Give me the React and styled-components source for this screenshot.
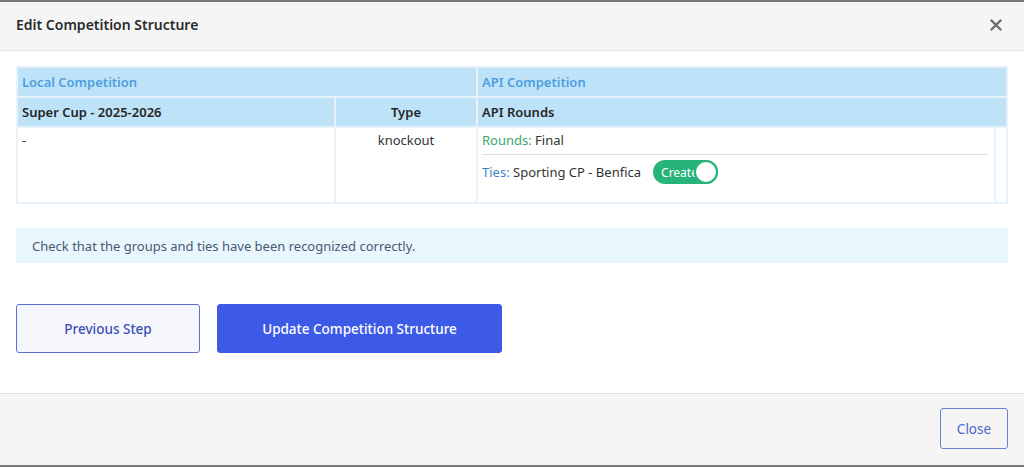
import React, { useState } from "react";
import styled, { createGlobalStyle } from "styled-components";

/* ---------- Global ---------- */
const GlobalStyle = createGlobalStyle`
  html, body {
    margin: 0;
    padding: 0;
    background: #fff;
  }
  body {
    font-family: "Noto Sans", "Open Sans", sans-serif;
    color: #333;
  }
  * { box-sizing: border-box; }
`;

/* ---------- Modal shell ---------- */
const Modal = styled.div`
  width: 1024px;
  height: 467px;
  display: flex;
  flex-direction: column;
  border-top: 2px solid #7a7a7a;
  border-bottom: 2px solid #7a7a7a;
  background: #fff;
`;

const Header = styled.div`
  height: 49px;
  display: flex;
  align-items: center;
  justify-content: space-between;
  padding: 0 16px 3px;
  background: #f5f5f5;
  border-bottom: 1px solid #e6e6e6;
`;

const Title = styled.h5`
  margin: 0;
  font-size: 14px;
  font-weight: 600;
  color: #2b2b2b;
`;

const CloseX = styled.button`
  border: none;
  background: none;
  padding: 0;
  width: 20px;
  height: 20px;
  display: flex;
  align-items: center;
  justify-content: center;
  cursor: pointer;
  margin-right: 2px;
`;

const Body = styled.div`
  flex: 1;
  padding: 15px 16px 0;
`;

/* ---------- Table ---------- */
const Table = styled.table`
  width: 992px;
  border-collapse: collapse;
  border: 2px solid #e6f3fc;
  font-size: 13px;
`;

const Th = styled.th`
  background: #bee3f8;
  border: 2px solid #e6f3fc;
  height: 30px;
  padding: 0 4px;
  text-align: ${({ $center }) => ($center ? "center" : "left")};
  font-weight: 600;
  color: ${({ $blue }) => ($blue ? "#4d9ee0" : "#262626")};
  width: ${({ $w }) => $w || "auto"};
`;

const Td = styled.td`
  border: 2px solid #e6f3fc;
  vertical-align: top;
  padding: ${({ $pad }) => $pad || "3px 4px"};
  height: 76px;
  text-align: ${({ $center }) => ($center ? "center" : "left")};
  color: #333;
  width: ${({ $w }) => $w || "auto"};
`;

const InfoLine = styled.div`
  display: flex;
  align-items: center;
  gap: 12px;
  padding: ${({ $top }) => ($top ? "0 0 5px" : "5px 0 0")};
  border-bottom: ${({ $top }) => ($top ? "1px solid #dcdcdc" : "none")};
  margin-right: 6px;
`;

const Label = styled.span`
  color: ${({ $tone }) => ($tone === "green" ? "#3fa56c" : "#3f86c8")};
`;

/* ---------- Toggle ---------- */
const Toggle = styled.button`
  position: relative;
  width: 65px;
  height: 24px;
  border-radius: 12px;
  border: none;
  background: #27b47a;
  color: #fff;
  font-family: inherit;
  font-size: 12px;
  text-align: left;
  padding: 0 0 0 8px;
  cursor: pointer;
`;

const Knob = styled.span`
  position: absolute;
  top: 0;
  right: 0;
  width: 24px;
  height: 24px;
  border-radius: 50%;
  background: #fff;
  border: 2px solid #27b47a;
`;

/* ---------- Alert ---------- */
const Alert = styled.div`
  margin-top: 24px;
  height: 35px;
  display: flex;
  align-items: center;
  padding: 0 16px;
  background: #e8f6fe;
  color: #4a5a70;
  font-size: 13px;
`;

/* ---------- Buttons ---------- */
const Actions = styled.div`
  display: flex;
  gap: 17px;
  margin-top: 41px;
`;

const Button = styled.button`
  height: 49px;
  width: ${({ $w }) => $w};
  border-radius: 3px;
  font-family: inherit;
  font-size: 13.5px;
  font-weight: 500;
  cursor: pointer;
  border: 1px solid ${({ $primary }) => ($primary ? "#3d5ae6" : "#5b70d3")};
  background: ${({ $primary }) => ($primary ? "#3d5ae6" : "#f6f7fd")};
  color: ${({ $primary }) => ($primary ? "#fff" : "#3b4fb8")};
`;

/* ---------- Footer ---------- */
const Footer = styled.div`
  height: 72px;
  display: flex;
  align-items: center;
  justify-content: flex-end;
  padding: 0 16px 2px;
  background: #f5f5f5;
  border-top: 1px solid #e3e3e3;
`;

const CloseButton = styled.button`
  width: 68px;
  height: 41px;
  border-radius: 3px;
  border: 1px solid #6a7fd6;
  background: transparent;
  color: #4d63c9;
  font-family: inherit;
  font-size: 13.5px;
  cursor: pointer;
`;

/* ---------- Component ---------- */
export default function App() {
  const [create, setCreate] = useState(true);

  return (
    <>
      <GlobalStyle />
      <Modal>
        <Header>
          <Title>Edit Competition Structure</Title>
          <CloseX aria-label="Close">
            <svg width="12" height="12" viewBox="0 0 12 12">
              <path d="M1.5 1.5 L10.5 10.5 M10.5 1.5 L1.5 10.5" stroke="#6b6b6b" strokeWidth="2.4" strokeLinecap="round" />
            </svg>
          </CloseX>
        </Header>

        <Body>
          <Table>
            <thead>
              <tr>
                <Th colSpan={2} $blue>Local Competition</Th>
                <Th colSpan={2} $blue>API Competition</Th>
              </tr>
              <tr>
                <Th $w="318px">Super Cup - 2025-2026</Th>
                <Th $center $w="142px">Type</Th>
                <Th colSpan={2}>API Rounds</Th>
              </tr>
            </thead>
            <tbody>
              <tr>
                <Td>-</Td>
                <Td $center>knockout</Td>
                <Td $pad="3px 0 0 4px">
                  <InfoLine $top>
                    <span>
                      <Label $tone="green">Rounds:</Label> Final
                    </span>
                  </InfoLine>
                  <InfoLine>
                    <span>
                      <Label>Ties:</Label> Sporting CP - Benfica
                    </span>
                    <Toggle onClick={() => setCreate(!create)}>
                      Create
                      <Knob />
                    </Toggle>
                  </InfoLine>
                </Td>
                <Td $w="12px" $pad="0" />
              </tr>
            </tbody>
          </Table>

          <Alert>Check that the groups and ties have been recognized correctly.</Alert>

          <Actions>
            <Button $w="184px">Previous Step</Button>
            <Button $primary $w="285px">Update Competition Structure</Button>
          </Actions>
        </Body>

        <Footer>
          <CloseButton>Close</CloseButton>
        </Footer>
      </Modal>
    </>
  );
}
